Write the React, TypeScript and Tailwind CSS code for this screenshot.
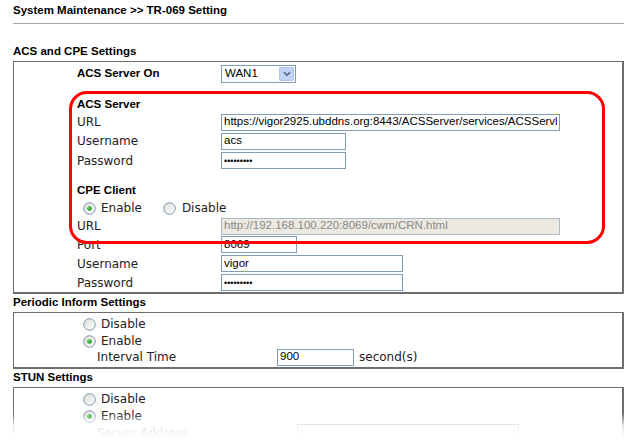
import React from 'react';

const arial = "font-['Liberation_Sans',Arial,sans-serif]";
const verdana = "font-['DejaVu_Sans',Verdana,sans-serif]";

function Radio({ checked }: { checked?: boolean }) {
  return (
    <svg width="13" height="13" viewBox="0 0 13 13" className="shrink-0">
      <defs>
        <linearGradient id="rg" x1="0" y1="0" x2="1" y2="1">
          <stop offset="0" stopColor="#dcdcd4" />
          <stop offset="1" stopColor="#ffffff" />
        </linearGradient>
      </defs>
      <circle cx="6.5" cy="6.5" r="5.8" fill="url(#rg)" stroke="#7b95b3" strokeWidth="1" />
      {checked && <circle cx="6.5" cy="6.5" r="2.3" fill="#2aa12a" />}
      {checked && <circle cx="6" cy="6" r="0.9" fill="#7fd87f" />}
    </svg>
  );
}

function TextInput({ value, width, disabled, password }: { value?: string; width: string; disabled?: boolean; password?: boolean }) {
  return (
    <input
      readOnly
      type="text"
      value={value ?? ''}
      disabled={disabled}
      className={`${width} h-[17px] px-[2px] border outline-none ${arial} ${
        disabled ? 'bg-[#ebe9e0] border-[#a9b9cc] text-[#8a8a8a]' : 'bg-white border-[#7f9db9] text-black'
      } ${password ? 'text-[9px] leading-none' : 'text-[11.5px]'}`}
    />
  );
}

function Row({ h, label, bold, children, labelW = 'w-[144px]', pl = 'pl-[63px]' }: { h: string; label: string; bold?: boolean; children?: React.ReactNode; labelW?: string; pl?: string }) {
  return (
    <div className={`flex items-center ${h} ${pl}`}>
      <div className={`${labelW} shrink-0 whitespace-nowrap ${bold ? `${arial} font-bold text-[11.5px]` : `${verdana} text-[12px] text-[#222]`}`}>
        {label}
      </div>
      {children}
    </div>
  );
}

function RadioLine({ h, label, checked }: { h: string; label: string; checked?: boolean }) {
  return (
    <div className={`flex items-center ${h} pl-[69px]`}>
      <Radio checked={checked} />
      <span className={`ml-[5px] ${verdana} text-[12px] text-[#222]`}>{label}</span>
    </div>
  );
}

function Box({ children }: { children: React.ReactNode }) {
  return (
    <div className="w-[611px] border-t border-l border-r-2 border-b-2 border-[#6e6e6e] bg-white">
      {children}
    </div>
  );
}

function SectionTitle({ text }: { text: string }) {
  return <div className={`h-[18px] flex items-center ${arial} font-bold text-[11.5px]`}>{text}</div>;
}

export default function App() {
  return (
    <div className="relative w-[640px] h-[439px] overflow-hidden bg-white text-black px-[13px]">
      <div className={`h-[22px] flex items-center ${arial} font-bold text-[11.5px]`}>System Maintenance &gt;&gt; TR-069 Setting</div>
      <div className="mt-[1px] w-[611px] h-px bg-[#a8a8a8]" />

      <div className="mt-[19px]">
        <SectionTitle text="ACS and CPE Settings" />
      </div>
      <Box>
        <Row h="h-[24px]" label="ACS Server On" bold>
          <div className={`w-[75px] h-[18px] border border-[#7f9db9] bg-white flex items-center justify-between pl-[3px] pr-px ${arial} text-[11.5px]`}>
            <span>WAN1</span>
            <span className="w-[15px] h-[14px] bg-[#c3d3f8] border border-[#b4c6ef] rounded-[1px] flex items-center justify-center">
              <svg width="8" height="6" viewBox="0 0 8 6">
                <path d="M1 1.2 L4 4.2 L7 1.2" fill="none" stroke="#4d6185" strokeWidth="1.6" />
              </svg>
            </span>
          </div>
        </Row>
        <div className="h-[10px]" />
        <Row h="h-[17px]" label="ACS Server" bold />
        <Row h="h-[18px]" label="URL">
          <TextInput width="w-[339px]" value="https://vigor2925.ubddns.org:8443/ACSServer/services/ACSServlet" />
        </Row>
        <Row h="h-[20px]" label="Username">
          <TextInput width="w-[125px]" value="acs" />
        </Row>
        <Row h="h-[19px]" label="Password">
          <TextInput width="w-[125px]" value="•••••••••" password />
        </Row>
        <div className="h-[12px]" />
        <Row h="h-[17px]" label="CPE Client" bold />
        <div className="flex items-center h-[18px] pl-[69px]">
          <Radio checked />
          <span className={`ml-[5px] ${verdana} text-[12px] text-[#222]`}>Enable</span>
          <span className="ml-[21px]">
            <Radio />
          </span>
          <span className={`ml-[6px] ${verdana} text-[12px] text-[#222]`}>Disable</span>
        </div>
        <Row h="h-[18px]" label="URL">
          <TextInput width="w-[339px]" value="http://192.168.100.220:8069/cwm/CRN.html" disabled />
        </Row>
        <Row h="h-[19px]" label="Port">
          <TextInput width="w-[76px]" value="8069" />
        </Row>
        <Row h="h-[19px]" label="Username">
          <TextInput width="w-[182px]" value="vigor" />
        </Row>
        <Row h="h-[19px]" label="Password">
          <TextInput width="w-[182px]" value="•••••••••" password />
        </Row>
      </Box>

      <SectionTitle text="Periodic Inform Settings" />
      <Box>
        <div className="pt-[2px] pb-[2px]">
          <RadioLine h="h-[18px]" label="Disable" />
          <RadioLine h="h-[16px]" label="Enable" checked />
          <Row h="h-[16px]" label="Interval Time" pl="pl-[83px]" labelW="w-[180px]">
            <TextInput width="w-[77px]" value="900" />
            <span className={`ml-[5px] ${verdana} text-[12px] text-[#222]`}>second(s)</span>
          </Row>
        </div>
      </Box>

      <SectionTitle text="STUN Settings" />
      <Box>
        <div className="pt-[2px]">
          <RadioLine h="h-[18px]" label="Disable" />
          <RadioLine h="h-[16px]" label="Enable" checked />
          <Row h="h-[17px]" label="Server Address" pl="pl-[83px]" labelW="w-[200px]">
            <TextInput width="w-[222px]" value="" />
          </Row>
          <div className="h-[20px]" />
        </div>
      </Box>

      {/* red highlight annotation */}
      <div className="absolute left-[69px] top-[91px] w-[536px] h-[153px] border-[3px] border-[#ff0000] rounded-[18px] pointer-events-none" />

      {/* bottom fade */}
      <div className="absolute left-0 right-0 bottom-0 h-[26px] bg-linear-to-b from-white/0 via-white/85 to-white pointer-events-none" />
    </div>
  );
}
